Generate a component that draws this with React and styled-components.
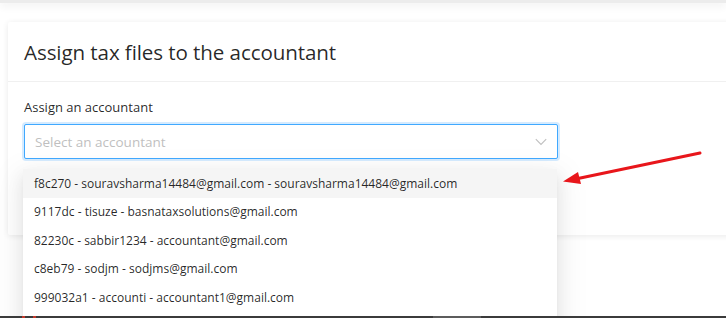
import React from "react";
import styled, { createGlobalStyle } from "styled-components";

const Global = createGlobalStyle`
  html, body { margin: 0; padding: 0; background: #ffffff; }
  body { font-family: "Open Sans", "Noto Sans", sans-serif; color: rgba(0,0,0,0.85); overflow: hidden; }
  #root { width: 726px; height: 318px; overflow: hidden; position: relative; }
`;

const TopBar = styled.div`
  height: 3px;
  background: #ececec;
  box-shadow: 0 2px 8px rgba(0,0,0,0.12);
`;

const Content = styled.main`
  padding: 19px 0 0 8px;
`;

const Card = styled.section`
  width: 760px;
  background: #fff;
  box-shadow: 0 1px 6px rgba(0,0,0,0.09);
  border-radius: 2px;
`;

const CardHeader = styled.header`
  height: 59px;
  display: flex;
  align-items: center;
  padding: 0 16px;
  border-bottom: 1px solid #f0f0f0;
`;

const Title = styled.h2`
  margin: 0;
  font-size: 20.6px;
  font-weight: 400;
  color: rgba(0,0,0,0.85);
  letter-spacing: -0.1px;
`;

const CardBody = styled.div`
  padding: 16px 16px 76px 16px;
`;

const Label = styled.label`
  display: block;
  font-size: 13px;
  line-height: 18px;
  margin-bottom: 8px;
  color: rgba(0,0,0,0.85);
`;

const SelectWrap = styled.div`
  position: relative;
  width: 534px;
`;

const SelectBox = styled.div`
  box-sizing: border-box;
  height: 35px;
  border: 1px solid #40a9ff;
  border-radius: 2px;
  box-shadow: 0 0 0 2px rgba(24,144,255,0.18);
  display: flex;
  align-items: center;
  justify-content: space-between;
  padding: 1px 10px 0 10px;
  background: #fff;
`;

const Placeholder = styled.span`
  font-size: 13.5px;
  color: #bfbfbf;
`;

const Dropdown = styled.ul`
  position: absolute;
  top: 45px;
  left: -1px;
  width: 534px;
  margin: 0;
  padding: 0 0 24px 0;
  list-style: none;
  background: #fff;
  box-shadow: 0 3px 6px -4px rgba(0,0,0,0.12), 0 6px 16px 0 rgba(0,0,0,0.08), 0 9px 28px 8px rgba(0,0,0,0.05);
  z-index: 5;
`;

const Option = styled.li`
  height: 28.5px;
  display: flex;
  align-items: center;
  padding: 0 11px;
  font-size: 12px;
  color: rgba(0,0,0,0.85);
  background: ${p => (p.$active ? "#f5f5f5" : "#fff")};
  white-space: nowrap;
`;

const Annotation = styled.svg`
  position: absolute;
  left: 0;
  top: 0;
  pointer-events: none;
  z-index: 10;
`;

const Taskbar = styled.div`
  position: absolute;
  left: 0;
  bottom: 0;
  width: 726px;
  height: 2px;
  background: #3b3b3b;
  z-index: 20;
`;

const TaskSeg = styled.span`
  position: absolute;
  top: 0;
  height: 2px;
  background: ${p => p.$color};
`;

const options = [
  "f8c270 - souravsharma14484@gmail.com - souravsharma14484@gmail.com",
  "9117dc - tisuze - basnataxsolutions@gmail.com",
  "82230c - sabbir1234 - accountant@gmail.com",
  "c8eb79 - sodjm - sodjms@gmail.com",
  "999032a1 - accounti - accountant1@gmail.com",
];

export default function App() {
  return (
    <>
      <Global />
      <TopBar />
      <Content>
        <Card>
          <CardHeader>
            <Title>Assign tax files to the accountant</Title>
          </CardHeader>
          <CardBody>
            <Label>Assign an accountant</Label>
            <SelectWrap>
              <SelectBox>
                <Placeholder>Select an accountant</Placeholder>
                <svg width="12" height="8" viewBox="0 0 12 8">
                  <path d="M0.8 1.2 L6 6.4 L11.2 1.2" fill="none" stroke="#bfbfbf" strokeWidth="1.1" />
                </svg>
              </SelectBox>
              <Dropdown>
                {options.map((o, i) => (
                  <Option key={o} $active={i === 0}>{o}</Option>
                ))}
              </Dropdown>
            </SelectWrap>
          </CardBody>
        </Card>
      </Content>
      <Annotation width="726" height="318" viewBox="0 0 726 318">
        <line x1="700" y1="153" x2="578" y2="178.5" stroke="#e8161b" strokeWidth="3" strokeLinecap="round" />
        <polygon points="563,181.5 578,172 581,184" fill="#e8161b" />
      </Annotation>
      <Taskbar>
        <TaskSeg $color="#c0392b" style={{ left: 22, width: 3 }} />
        <TaskSeg $color="#c0392b" style={{ left: 33, width: 3 }} />
        <TaskSeg $color="#5c5c5c" style={{ left: 433, width: 48 }} />
      </Taskbar>
    </>
  );
}
